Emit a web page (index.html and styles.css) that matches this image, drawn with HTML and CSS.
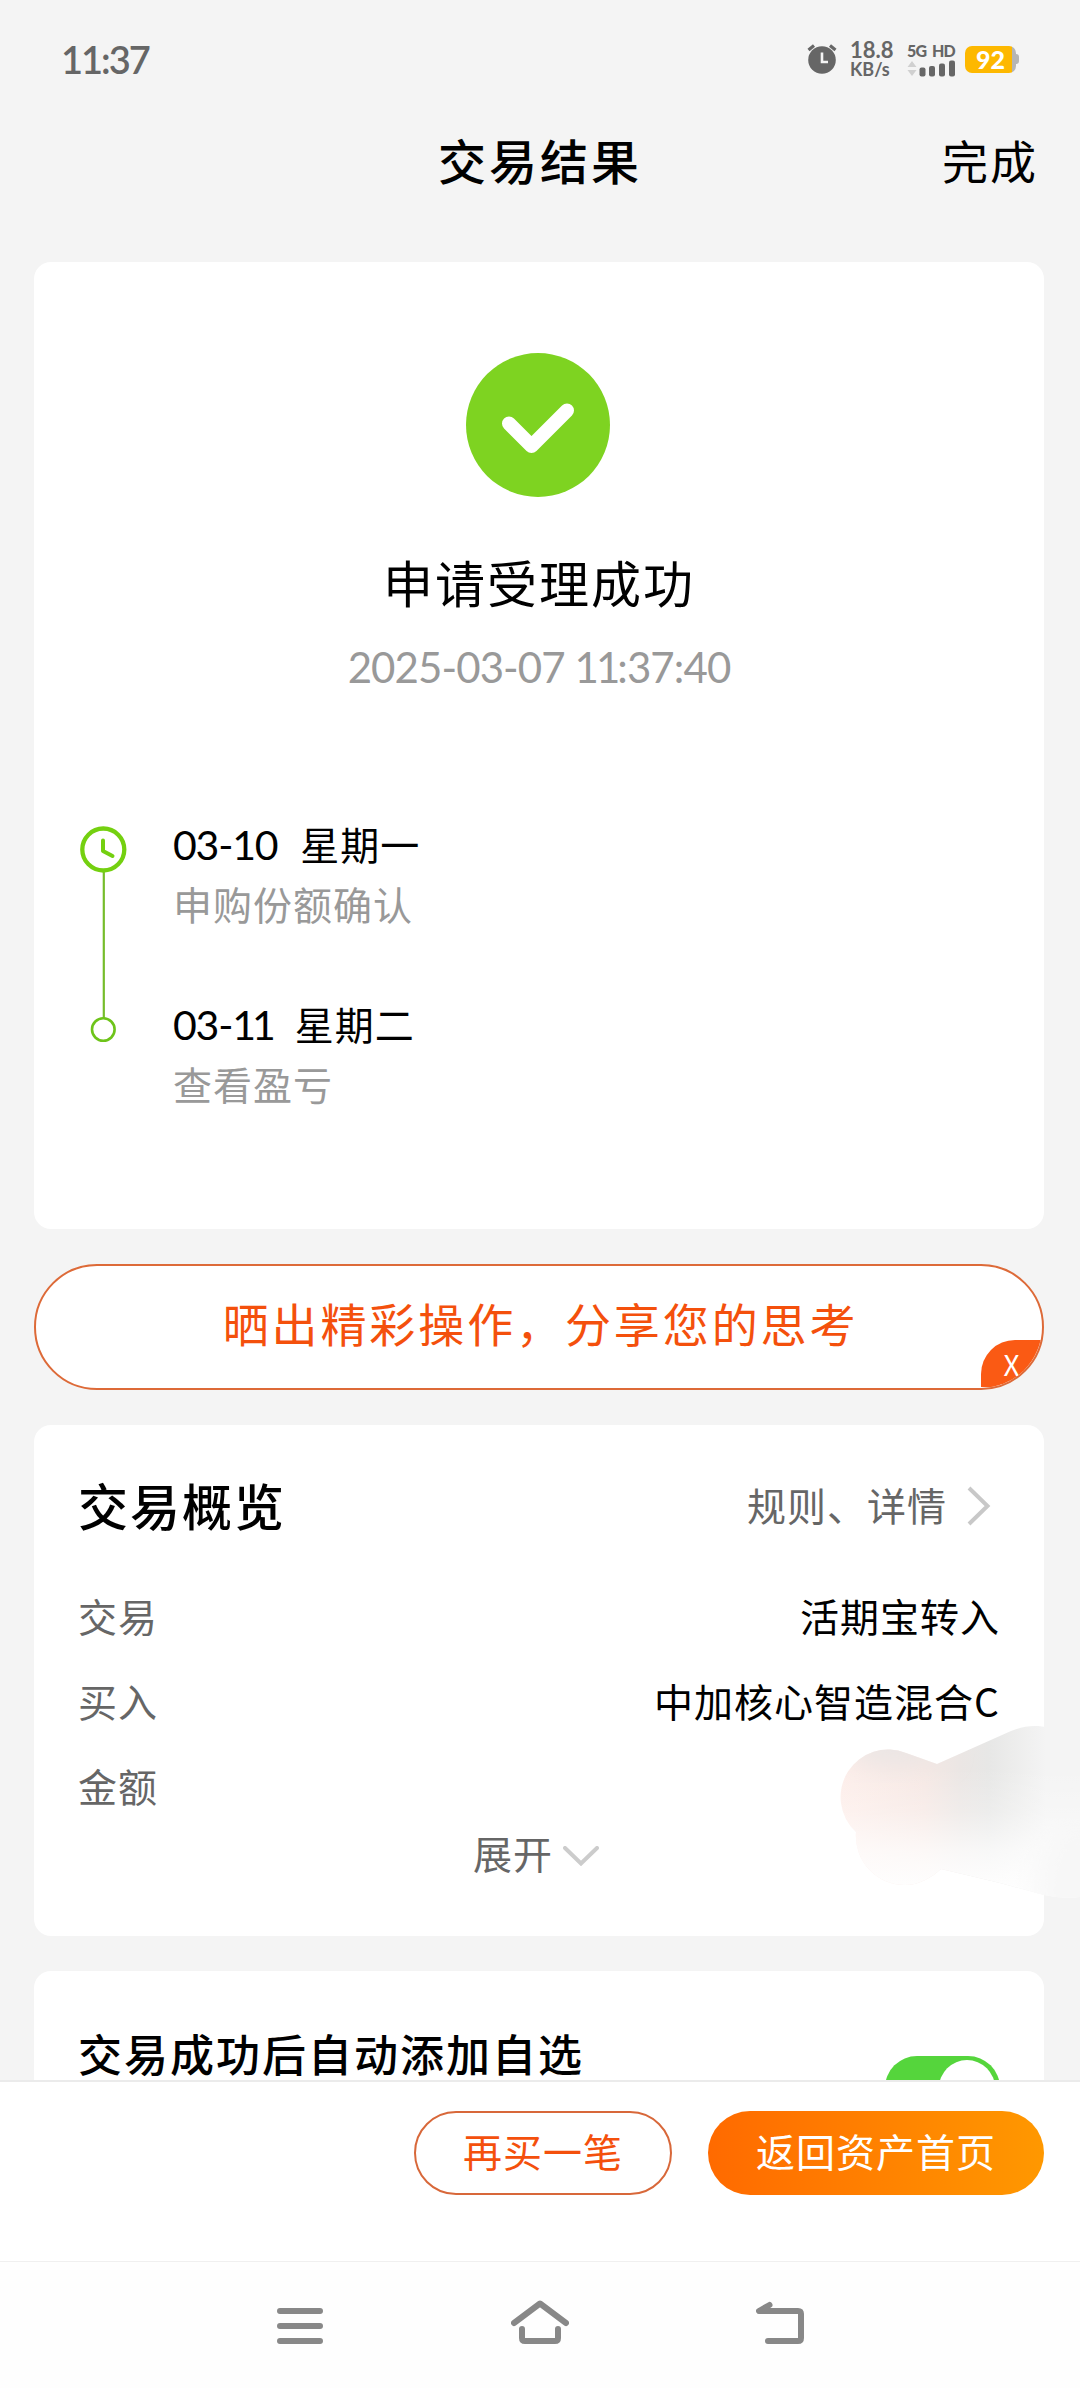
FILE: index.html
```html
<!DOCTYPE html>
<html lang="zh-CN">
<head>
    <meta charset="UTF-8">
    <meta name="viewport" content="width=device-width, initial-scale=1.0">
    <title>交易结果</title>
    <link rel="stylesheet" href="styles.css">
</head>
<body>
    <div class="status-bar">
        <span class="time">11:37</span>
        <div class="status-icons">
            <svg class="alarm" width="30" height="30" viewBox="0 0 30 30">
                <circle cx="15" cy="16" r="13.8" fill="#666"/>
                <path d="M1.5 6 L7 1.5 M23 1.5 L28.5 6" stroke="#666" stroke-width="3.2" fill="none"/>
                <path d="M15 8.5 V18 H21" stroke="#f4f4f4" stroke-width="2.6" fill="none"/>
            </svg>
            <div class="speed">
                <span class="speed-num">18.8</span>
                <span class="speed-unit">KB/s</span>
            </div>
            <div class="network">
                <div class="network-type"><span>5G</span><span>HD</span></div>
                <svg width="48" height="17" viewBox="0 0 48 17">
                    <path d="M0.5 7 L5 1 L9.5 7 Z M0.5 10 L5 16 L9.5 10 Z" fill="#d0d0d0"/>
                    <rect x="12.5" y="7.5" width="6" height="9" rx="2" fill="#666"/>
                    <rect x="22" y="6" width="6" height="10.5" rx="2" fill="#666"/>
                    <rect x="32" y="3.5" width="6" height="13" rx="2" fill="#666"/>
                    <rect x="42" y="0.5" width="6" height="16" rx="2" fill="#666"/>
                </svg>
            </div>
            <div class="battery"><span>92</span></div>
            <div class="battery-tip"></div>
        </div>
    </div>

    <div class="header">
        <span></span>
        <h1>交易结果</h1>
        <a class="done">完成</a>
    </div>

    <div class="content">
        <div class="card result">
            <svg class="success" width="144" height="144" viewBox="0 0 144 144">
                <circle cx="72" cy="72" r="72" fill="#7ed321"/>
                <path d="M43 70.5 L65.5 93 L101 57.5" fill="none" stroke="#fff" stroke-width="14" stroke-linecap="round" stroke-linejoin="round"/>
            </svg>
            <h2>申请受理成功</h2>
            <p class="datetime">2025-03-07 <span class="ones">11</span>:37:40</p>

            <div class="timeline">
                <svg width="48" height="206" viewBox="0 0 48 206">
                    <path d="M24.8 46 V194" stroke="#76bd2b" stroke-width="2.2"/>
                    <circle cx="24.3" cy="24.5" r="21" fill="#fff" stroke="#74d010" stroke-width="4.3"/>
                    <path d="M24 15.5 V26 L33.5 31" fill="none" stroke="#74d010" stroke-width="4" stroke-linecap="round" stroke-linejoin="round"/>
                    <circle cx="24.3" cy="204.5" r="11.3" fill="#fff" stroke="#6ec41a" stroke-width="2.6"/>
                </svg>
                <div class="steps">
                    <div class="step">
                        <p class="step-date"><span class="num">03-10</span>星期一</p>
                        <p class="step-text">申购份额确认</p>
                    </div>
                    <div class="step">
                        <p class="step-date"><span class="num">03-<span class="ones">11</span></span>星期二</p>
                        <p class="step-text">查看盈亏</p>
                    </div>
                </div>
            </div>
        </div>

        <div class="share">
            <span>晒出精彩操作，分享您的思考</span>
            <button class="share-close">X</button>
        </div>

        <div class="card overview">
            <div class="overview-head">
                <h2>交易概览</h2>
                <a class="rules">规则、详情
                    <svg width="24" height="40" viewBox="0 0 24 40">
                        <path d="M2 2 L20.5 20 L2 38" fill="none" stroke="#c8c8c8" stroke-width="4"/>
                    </svg>
                </a>
            </div>
            <div class="row"><span class="label">交易</span><span>活期宝转入</span></div>
            <div class="row"><span class="label">买入</span><span>中加核心智造混合C</span></div>
            <div class="row"><span class="label">金额</span></div>
            <div class="expand">展开
                <svg width="36" height="20" viewBox="0 0 36 20">
                    <path d="M2 2 L18 17.5 L34 2" fill="none" stroke="#ccc" stroke-width="4" stroke-linecap="round"/>
                </svg>
            </div>
            <!-- smear that hides the amount -->
            <svg class="smear" width="240" height="174" viewBox="0 0 240 174">
                <defs>
                    <clipPath id="smearShape">
                        <path d="M97 39 L66 28 A47.5 47.5 0 0 0 16 107 A49 49 0 0 0 65 160 C80 160 92 152 101 144 L160 158 L204 170 Q222 174 240 172 V30 C226 4 200 -6 171 6 Z"/>
                    </clipPath>
                    <linearGradient id="smearBase" x1="0" x2="1" y1="0" y2="0">
                        <stop offset="0" stop-color="#fdeeea"/>
                        <stop offset="0.35" stop-color="#f6e8e4"/>
                        <stop offset="0.5" stop-color="#ebe6e4"/>
                        <stop offset="0.62" stop-color="#e7e7e6"/>
                        <stop offset="0.86" stop-color="#f4f4f4"/>
                        <stop offset="1" stop-color="#f4f4f4"/>
                    </linearGradient>
                    <linearGradient id="smearFade" x1="0" x2="0" y1="0" y2="1">
                        <stop offset="0.25" stop-color="#fff" stop-opacity="0"/>
                        <stop offset="0.5" stop-color="#fff" stop-opacity="0.25"/>
                        <stop offset="0.72" stop-color="#fff" stop-opacity="0.7"/>
                        <stop offset="0.95" stop-color="#fefefe"/>
                    </linearGradient>
                    <filter id="soft" x="-50%" y="-50%" width="200%" height="200%"><feGaussianBlur stdDeviation="14"/></filter>
                </defs>
                <g clip-path="url(#smearShape)">
                    <rect width="240" height="174" fill="url(#smearBase)"/>
                    <ellipse cx="55" cy="22" rx="50" ry="18" fill="#e9e5e4" filter="url(#soft)"/>
                    <rect width="240" height="174" fill="url(#smearFade)"/>
                    <ellipse cx="240" cy="165" rx="45" ry="70" fill="#f7f7f7" filter="url(#soft)"/>
                </g>
            </svg>
        </div>

        <div class="card auto-add">
            <span>交易成功后自动添加自选</span>
            <div class="switch"><div class="knob"></div></div>
        </div>
    </div>

    <div class="actions">
        <button class="btn-again">再买一笔</button>
        <button class="btn-home">返回资产首页</button>
    </div>

    <div class="nav-bar">
        <svg width="46" height="44" viewBox="0 0 46 44">
            <path d="M3 11 H43 M3 26 H43 M3 41 H43" stroke="#888" stroke-width="6" stroke-linecap="round"/>
        </svg>
        <svg width="58" height="44" viewBox="0 0 58 44">
            <path d="M3 23 L29 3.5 L55 23 M11 29 V38 Q11 41 14 41 H44 Q47 41 47 38 V29" fill="none" stroke="#888" stroke-width="6" stroke-linecap="round" stroke-linejoin="round"/>
        </svg>
        <svg width="48" height="44" viewBox="0 0 48 44">
            <path d="M13.5 5 L3 11 H42 Q45 11 45 14 V38 Q45 41 42 41 H12" fill="none" stroke="#888" stroke-width="6" stroke-linecap="round" stroke-linejoin="round"/>
        </svg>
    </div>
</body>
</html>
```
FILE: styles.css
```css
* {
    box-sizing: border-box;
    margin: 0;
    padding: 0;
}
body {
    display: flex;
    flex-direction: column;
    width: 1080px;
    height: 2388px;
    overflow: hidden;
    background: #f4f4f4;
    color: #000;
    font-family: "Noto Sans CJK SC", sans-serif;
}
h1, h2 {
    font-weight: 500;
}
button {
    border: none;
    font-family: inherit;
}
svg {
    display: block;
    flex: none;
}

/* status bar */
.status-bar {
    display: flex;
    justify-content: space-between;
    align-items: center;
    height: 118px;
    padding: 0 61px 0 61px;
    color: #666;
    font-family: Lato, sans-serif;
}
.time {
    font-size: 38px;
    font-weight: 600;
    letter-spacing: -2px;
}
.status-icons {
    display: flex;
    align-items: center;
}
.speed {
    display: flex;
    flex-direction: column;
    width: 46px;
    margin-left: 13px;
    font-weight: 700;
}
.speed-num {
    font-size: 22px;
    line-height: 20px;
}
.speed-unit {
    font-size: 18px;
    line-height: 18px;
}
.network {
    width: 48px;
    margin: 0 10px 0 11px;
}
.network-type {
    display: flex;
    justify-content: space-between;
    font-size: 16px;
    font-weight: 900;
    letter-spacing: -0.8px;
    line-height: 18px;
}
.battery {
    width: 51px;
    height: 27px;
    border-radius: 7px;
    background: linear-gradient(to right, #fdb800 47px, #b5b5b5 47px);
    color: #fff;
    font-size: 25px;
    font-weight: 900;
    line-height: 27px;
    text-align: center;
}
.battery-tip {
    width: 3px;
    height: 10px;
    border-radius: 0 3px 3px 0;
    background: #b5b5b5;
}

/* header */
.header {
    display: grid;
    grid-template-columns: 1fr auto 1fr;
    align-items: center;
    height: 82px;
    margin-bottom: 62px;
    padding: 0 42px;
}
.header h1 {
    font-size: 48px;
    letter-spacing: 3px;
    line-height: 82px;
}
.done {
    justify-self: end;
    font-size: 46px;
    letter-spacing: 2px;
}

/* content */
.content {
    display: flex;
    flex-direction: column;
    flex: 1;
    gap: 35px;
    padding: 0 36px 0 34px;
    overflow: hidden;
}
.card {
    flex: none;
    border-radius: 17px;
    background: #fff;
}
.result {
    display: flex;
    flex-direction: column;
    align-items: center;
    height: 967px;
    padding-top: 91px;
}
.success {
    margin-right: 2px;
}
.result h2 {
    margin-top: 46px;
    font-size: 50px;
    font-weight: 400;
    letter-spacing: 2px;
    line-height: 76px;
}
.datetime {
    margin-top: 18px;
    color: #999;
    font-family: Lato, sans-serif;
    font-size: 42px;
    letter-spacing: -0.9px;
    line-height: 60px;
}
.ones {
    letter-spacing: -3px;
}
.timeline {
    display: flex;
    align-self: stretch;
    margin-top: 115px;
    padding-left: 45px;
}
.timeline svg {
    margin-top: 13px;
    overflow: visible;
}
.steps {
    padding-left: 46px;
}
.step {
    height: 180px;
    padding-top: 2px;
    font-size: 39px;
    letter-spacing: 1px;
    line-height: 59px;
}
.step-date .num {
    display: inline-block;
    margin-right: 23px;
    font-family: Lato, sans-serif;
    font-size: 41px;
    letter-spacing: -1.2px;
}
.step-date .ones {
    letter-spacing: -4px;
}
.step-text {
    color: #999;
}

.share {
    position: relative;
    display: flex;
    justify-content: center;
    align-items: center;
    flex: none;
    height: 126px;
    padding: 0 0 10px 3px;
    border: 2px solid #dd6a38;
    border-radius: 63px;
    background: #fff;
    color: #f4500c;
    font-size: 46px;
    letter-spacing: 2.9px;
    overflow: hidden;
}
.share-close {
    position: absolute;
    right: 0;
    bottom: 1px;
    width: 61px;
    height: 47px;
    border-radius: 34px 0 0 0;
    background: #fa5a14;
    color: #fff;
    font-size: 28px;
}

.overview {
    position: relative;
    height: 511px;
    padding: 39px 44px 0;
}
.overview-head {
    display: flex;
    justify-content: space-between;
    align-items: center;
    height: 80px;
    margin-bottom: 29px;
}
.overview-head h2 {
    font-size: 50px;
    letter-spacing: 2px;
}
.rules {
    display: flex;
    align-items: center;
    gap: 20px;
    margin-right: 9px;
    color: #666;
    font-size: 39px;
    letter-spacing: 1px;
}
.rules svg {
    margin-top: 4px;
}
.row {
    display: flex;
    justify-content: space-between;
    height: 85px;
    font-size: 39px;
    letter-spacing: 1px;
    line-height: 85px;
}
.label {
    color: #666;
}
.expand {
    display: flex;
    justify-content: center;
    align-items: center;
    gap: 10px;
    height: 48px;
    padding-right: 6px;
    color: #666;
    font-size: 39px;
    letter-spacing: 1px;
}
.expand svg {
    margin-top: 8px;
}
.smear {
    position: absolute;
    top: 300px;
    right: -36px;
}

.auto-add {
    display: flex;
    justify-content: space-between;
    align-items: flex-start;
    height: 230px;
    padding: 52px 44px 0;
    font-size: 44px;
    font-weight: 500;
    letter-spacing: 2px;
    line-height: 60px;
}
.switch {
    width: 115px;
    height: 64px;
    margin-top: 33px;
    padding: 4px 5px;
    border-radius: 32px;
    background: #55d53c;
}
.knob {
    width: 56px;
    height: 56px;
    margin-left: auto;
    border-radius: 50%;
    background: #fff;
}

/* bottom buttons */
.actions {
    display: flex;
    justify-content: flex-end;
    gap: 36px;
    height: 181px;
    padding: 29px 36px 0;
    border-top: 2px solid #ebebeb;
    background: #fff;
}
.actions button {
    height: 84px;
    padding-bottom: 6px;
    border-radius: 42px;
    font-size: 39px;
    letter-spacing: 1px;
}
.btn-again {
    width: 258px;
    border: 2px solid #d8683a;
    background: #fff;
    color: #f4500c;
}
.btn-home {
    width: 336px;
    background: linear-gradient(to right, #ff6a00, #ff9800);
    color: #fff;
}

/* system navigation */
.nav-bar {
    display: flex;
    justify-content: space-between;
    height: 127px;
    padding: 38px 276px 0 277px;
    border-top: 1px solid #f0f0f0;
    background: #fefefe;
}
```
